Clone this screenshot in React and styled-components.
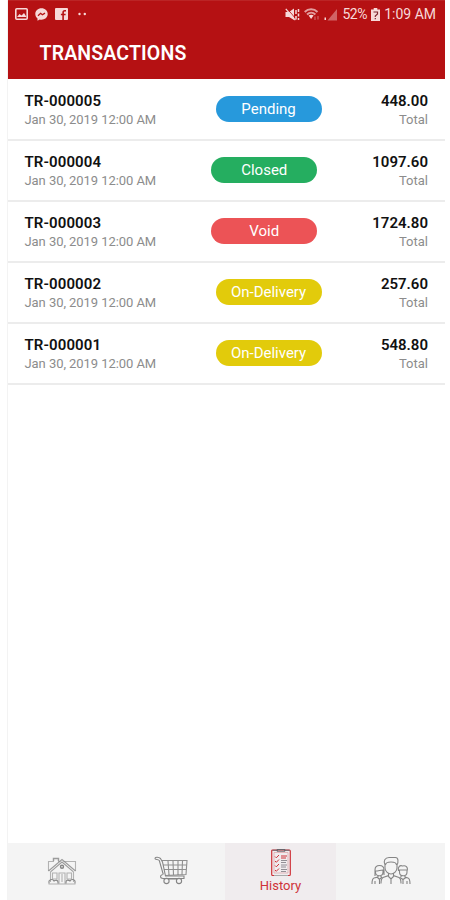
import React from "react";
import styled, { createGlobalStyle } from "styled-components";

const GlobalStyle = createGlobalStyle`
  * { box-sizing: border-box; }
  body { margin: 0; background: #fff; font-family: Roboto, "Liberation Sans", sans-serif; }
  svg { display: block; flex: none; }
`;

const Screen = styled.div`
  width: 438px;
  height: 900px;
  margin-left: 7px;
  border-left: 1px solid #f3f3f3;
  display: flex;
  flex-direction: column;
  background: #fff;
  overflow: hidden;
`;

const Header = styled.header`
  height: 79px;
  flex: none;
  background: #b51113;
  border-top: 1px solid #bb2425;
  color: #fff;
`;

const StatusBar = styled.div`
  height: 26px;
  padding: 0 9px 0 7px;
  display: flex;
  align-items: center;
  justify-content: space-between;
  color: #f7d9d9;
`;

const StatusGroup = styled.div`
  display: flex;
  align-items: center;
  gap: ${(p) => p.$gap}px;
`;

const StatusText = styled.span`
  font-size: 14px;
  line-height: 16px;
  letter-spacing: ${(p) => p.$spacing || 0}px;
  white-space: nowrap;
`;

const Title = styled.h1`
  margin: 13px 0 0 31.5px;
  font-size: 19.5px;
  line-height: 28px;
  font-weight: 600;
  letter-spacing: 0.15px;
`;

const List = styled.main`
  flex: 1;
  padding-top: 1px;
`;

const Row = styled.article`
  height: 61px;
  padding: 0 17px 2px 16.5px;
  border-bottom: 2px solid #ececec;
  display: flex;
  align-items: center;
  justify-content: space-between;
`;

const Details = styled.div`
  display: flex;
  flex-direction: column;
  align-items: ${(p) => (p.$end ? "flex-end" : "flex-start")};
  padding-top: 3px;
  white-space: nowrap;
`;

const Strong = styled.span`
  font-size: 15px;
  line-height: 20px;
  font-weight: 600;
  color: #111;
  letter-spacing: ${(p) => p.$spacing || 0}px;
`;

const Muted = styled.span`
  font-size: 13px;
  line-height: 18px;
  color: #8c8c8c;
  letter-spacing: ${(p) => p.$spacing || 0}px;
`;

const Badge = styled.span`
  width: 106px;
  height: 26px;
  border-radius: 13px;
  background: ${(p) => p.$color};
  color: #fff;
  font-size: 15px;
  line-height: 27px;
  text-align: center;
`;

const Nav = styled.nav`
  height: 57px;
  flex: none;
  display: grid;
  grid-template-columns: 108px 109px 111px 109px;
  background: #f4f4f4;
`;

const Tab = styled.div`
  display: flex;
  flex-direction: column;
  align-items: center;
  justify-content: ${(p) => (p.$active ? "flex-start" : "center")};
  padding: ${(p) => (p.$active ? "5px 0 0" : "0 0 2px")};
  background: ${(p) => (p.$active ? "#f0ecee" : "transparent")};
  color: ${(p) => (p.$active ? "#cf3238" : "#858585")};
`;

const TabLabel = styled.span`
  font-size: 13px;
  line-height: 16px;
  margin-top: 1px;
`;

const PictureIcon = () => (
  <svg width="13" height="12" viewBox="0 0 13 12">
    <rect x=".8" y=".8" width="11.4" height="10.4" rx="1" fill="none" stroke="currentColor" strokeWidth="1.6" />
    <path d="M2 9l2.500-3 2 1.500L9 5l2.500 4z" fill="currentColor" />
  </svg>
);

const MessengerIcon = () => (
  <svg width="13" height="13" viewBox="0 0 13 13">
    <path d="M6.500.3C2.900.3.3 2.900.3 6c0 1.900.8 3.400 2.200 4.400v2.300l2.200-1.200c3.900 1 8-1.400 8-5.500C12.700 2.900 10.100.3 6.500.3z" fill="currentColor" />
    <path d="M3 7.700l2.600-2.400 1.800 1.500L10 5.100" fill="none" stroke="#b51113" strokeWidth="1.300" />
  </svg>
);

const FacebookIcon = () => (
  <svg width="13" height="12" viewBox="0 0 13 12">
    <rect width="13" height="12" rx="1" fill="currentColor" />
    <path d="M11 2.800H9.800c-1.200 0-1.700.6-1.700 1.700V12M5.900 6.500h4.700" fill="none" stroke="#b51113" strokeWidth="1.600" />
  </svg>
);

const DotsIcon = () => (
  <svg width="9" height="4" viewBox="0 0 9 4">
    <circle cx="1.500" cy="2" r="1.200" fill="currentColor" />
    <circle cx="6.800" cy="2" r="1.200" fill="currentColor" />
  </svg>
);

const DotsSlot = styled.div`
  padding-left: 3px;
`;

const MuteIcon = () => (
  <svg width="15" height="13" viewBox="0 0 15 13">
    <path d="M.5 4H4L9 .5v11.500L4 9H.5z" fill="currentColor" />
    <path d="M1.800.3l9 10.500" stroke="#b51113" strokeWidth=".9" />
    <path d="M.8.8l9.500 11.400" stroke="currentColor" strokeWidth="1.300" />
    <path d="M11 2v4M11 8v3.500M13.500 1v3M13.500 5.500v3M13.500 10v2" fill="none" stroke="currentColor" strokeWidth="1.500" />
  </svg>
);

const WifiIcon = () => (
  <svg width="16" height="13" viewBox="0 0 16 13">
    <path d="M.7 4C4.300.3 10 .3 13.500 4M3 6.500c2.500-2.400 5.900-2.400 8.400 0" fill="none" stroke="currentColor" strokeWidth="1.900" opacity=".7" />
    <path d="M4.600 7.600c1.700-1.300 3.500-1.300 5 0L7.100 11z" fill="currentColor" />
    <path d="M11 8.500v3.500M14 8v3.500" stroke="currentColor" strokeWidth="1.200" opacity=".4" />
  </svg>
);

const SignalIcon = () => (
  <svg width="14" height="13" viewBox="0 0 14 13">
    <path d="M.5 12v-2.500h1.500V12z" fill="currentColor" />
    <path d="M3.500 12.500L13 1v11.500z" fill="currentColor" opacity=".42" />
  </svg>
);

const BatteryIcon = () => (
  <svg width="9" height="13" viewBox="0 0 9 13">
    <path d="M2.700 0h3.600v1.500H9V13H0V1.500h2.700z" fill="currentColor" />
    <path d="M2.500 4h4v2L4.300 8v1M4.300 10v1.200" fill="none" stroke="#7e2630" strokeWidth="1.200" />
  </svg>
);

const HomeIcon = () => (
  <svg width="30" height="30" viewBox="0 0 30 30" fill="none" stroke="currentColor" strokeWidth="1.100">
    <path d="M1.500 15V5.500H7M23 5.500h5.500V15M11 5.500h2.500M16.500 5.500H23" opacity=".6" />
    <path d="M6.500 5V2.500h5V5" strokeWidth="1.400" opacity=".8" />
    <path d="M1.500 15L15 3.500 28.500 15M3.500 15.800L15 6l11.500 9.800" opacity=".8" />
    <circle cx="15" cy="10.800" r="1.500" strokeWidth="1.400" />
    <path d="M3.500 16v10M26.500 16v10M1.500 28h27M12 28V17h6v11M5.500 17h4.500v6H5.500zM20 17h4.500v6H20zM15 18v8" opacity=".6" />
    <path d="M2 27.500V25c1.500-2 4-2 5 0 2-1.500 4-.5 4 1v1.500M19 27.500V26c0-2 2-2.500 4-1 1-2 4-2 5 0v2.500" />
  </svg>
);

const CartIcon = () => (
  <svg width="34" height="29" viewBox="0 0 34 29" fill="none" stroke="currentColor" strokeWidth="1.100">
    <path d="M1 2.500c0-2 4-1.500 5.500 0L8.500 6l3 14H30v2.500H9c-3 0-3.500-3-.5-4M1 2.500c0 1.500 3 .5 4.300 2l4 14" />
    <path d="M8 4.500h25l-1 14-21 1M9 9h23.500M10 13.500h22M14 5l1 14M19 5l.5 14M24 5v13.500M28.500 5l-.5 13.300" opacity=".9" />
    <circle cx="12.500" cy="25" r="2.600" />
    <circle cx="25" cy="25" r="2.600" />
    <path d="M15 23h7.500" />
  </svg>
);

const HistoryIcon = () => (
  <svg width="22" height="29" viewBox="0 0 22 29" fill="none" stroke="currentColor">
    <rect x="1.700" y="2" width="18.600" height="25.500" rx="1" strokeWidth="1.200" />
    <path d="M4 4.500h14v20.500H4z" stroke="#dca1a5" strokeWidth=".7" />
    <path d="M2.500 2.200H8M14 2.200h5.500" stroke="#69666c" strokeWidth="1.100" />
    <path d="M7 3.200V1.500h8v1.700z" stroke="#69666c" strokeWidth="1" />
    <path d="M4 27.500h14" stroke="#aaa" />
    <path d="M5 8.500l1.300 1.300L9 7M5 13l1.300 1.300L9 11.500M5 17.500l1.300 1.300L9 16M5 22l1.300 1.300L9 20.500" strokeWidth="1" />
    <path d="M11 8h6M11 10h5" strokeWidth="1" />
    <path d="M11 12.500h6M11 14.500h5M11 17h6M11 19h5M11 21.500h6M11 23.500h5" stroke="#88858a" strokeWidth=".9" />
  </svg>
);

const PeopleIcon = () => (
  <svg width="40" height="30" viewBox="0 0 40 30" fill="none" stroke="currentColor" strokeWidth="1.100">
    <path d="M14 9c-2-4 0-7.500 4-7.500h6.500c3 0 3 4.500 1.500 7.500v3c0 3-3 6-6 6s-6-3-6-6zM14.500 9c0-2.500 2-3 5.500-3s5.500.5 5.500 3" />
    <path d="M17.500 17v2.500L12 21.500c-2 1-2 3-2 6M22.500 17v2.500l5.500 2c2 1 2 3 2 6M17 20l3 3 3-3M20 23v5" />
    <path d="M4 20v-6c0-6 9-6 9 0v5M4.500 15c3 0 5-1 7.500-1v2c0 5-7.500 5-7.500 0zM7 19v2l-4 1c-2 .7-2 3-2 6M10 19v2M6 21l2.500 2.500L11 21M8.500 23v5M4 25v3" />
    <path d="M27.500 15c-1-5 2-6 4-5 3-1 6 1 4.500 5v1c0 5-7.500 5-7.500 0v-2h7M30 19v2M34 19v2l3 1c2 .7 2 3 2 6M29 21.500l3 2 3-2M32 23v5M36 25v3" />
  </svg>
);

const transactions = [
  { id: "TR-000005", status: "Pending", color: "#2799dc", amount: "448.00" },
  { id: "TR-000004", status: "Closed", color: "#25ae60", amount: "1097.60" },
  { id: "TR-000003", status: "Void", color: "#ec5356", amount: "1724.80" },
  { id: "TR-000002", status: "On-Delivery", color: "#e2cb0b", amount: "257.60" },
  { id: "TR-000001", status: "On-Delivery", color: "#e2cb0b", amount: "548.80" },
];

export default function App() {
  return (
    <>
      <GlobalStyle />
      <Screen>
        <Header>
          <StatusBar>
            <StatusGroup $gap={7}>
              <PictureIcon />
              <MessengerIcon />
              <FacebookIcon />
              <DotsSlot><DotsIcon /></DotsSlot>
            </StatusGroup>
            <StatusGroup $gap={4}>
              <MuteIcon />
              <WifiIcon />
              <SignalIcon />
              <StatusText $spacing={-0.4}>52%</StatusText>
              <BatteryIcon />
              <StatusText>1:09 AM</StatusText>
            </StatusGroup>
          </StatusBar>
          <Title>TRANSACTIONS</Title>
        </Header>
        <List>
          {transactions.map((t) => (
            <Row key={t.id}>
              <Details>
                <Strong $spacing={0.1}>{t.id}</Strong>
                <Muted $spacing={-0.06}>Jan 30, 2019 12:00 AM</Muted>
              </Details>
              <Badge $color={t.color}>{t.status}</Badge>
              <Details $end>
                <Strong>{t.amount}</Strong>
                <Muted>Total</Muted>
              </Details>
            </Row>
          ))}
        </List>
        <Nav>
          <Tab><HomeIcon /></Tab>
          <Tab><CartIcon /></Tab>
          <Tab $active>
            <HistoryIcon />
            <TabLabel>History</TabLabel>
          </Tab>
          <Tab><PeopleIcon /></Tab>
        </Nav>
      </Screen>
    </>
  );
}
